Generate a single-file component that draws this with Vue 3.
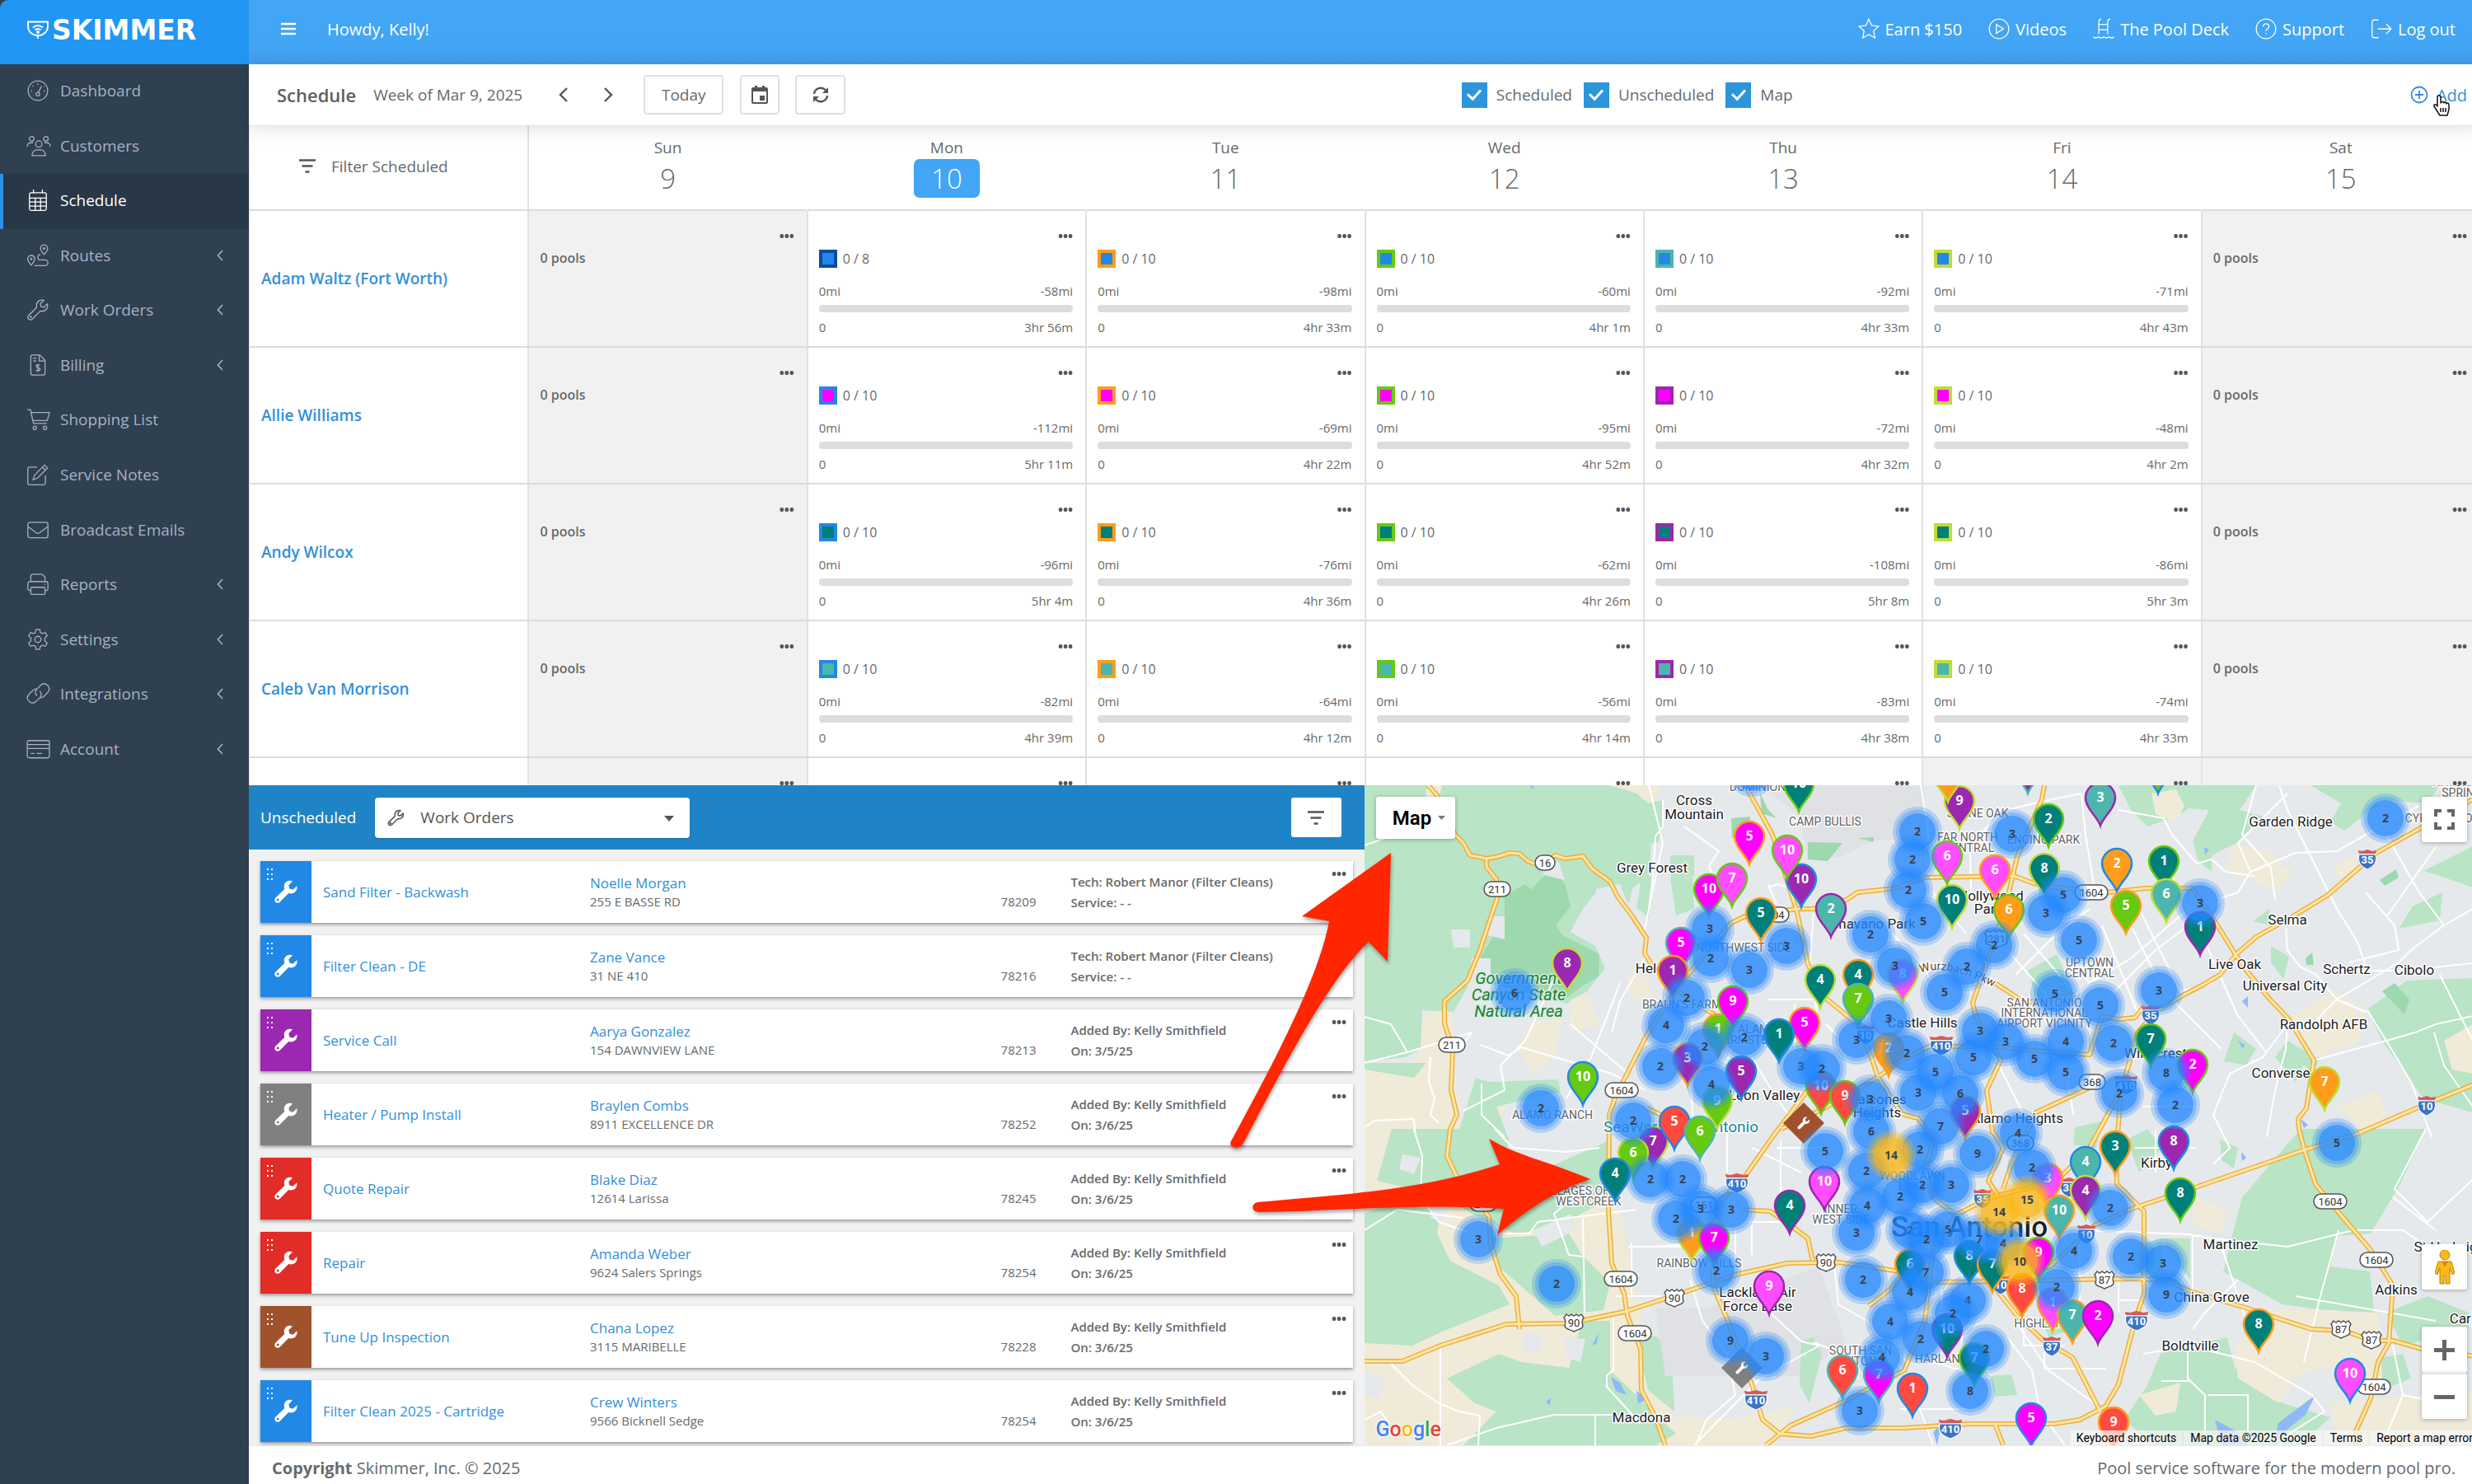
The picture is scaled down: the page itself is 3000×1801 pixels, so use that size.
<script setup>
const icons = {
  gauge: '<circle cx="12" cy="12" r="11"/><circle cx="12" cy="16" r="2"/><path d="M12.6 14l3.4-7"/><path d="M12 4.2v1M6 6.5l.6.6M4.2 12.5h1M18.8 12.5h1M18.6 7.6l.3-.3M6.4 16.8h.3" stroke-width="1.8"/>',
  users: '<circle cx="5" cy="4" r="2.6"/><circle cx="21" cy="4" r="2.6"/><circle cx="13" cy="10" r="3.6"/><path d="M0 13c0-3 1.500-4.500 4-4.500h2.500M26 13c0-3-1.500-4.500-4-4.500h-2.500M5.500 23c0-4 2.500-6.500 6-6.500h3c3.500 0 6 2.500 6 6.500z"/>',
  calendar: '<rect x="2.500" y="3.500" width="19" height="20" rx="2"/><path d="M2.500 9.500h19M2.500 14h19M2.500 18.700h19M9 9.500v14M15 9.500v14M7 0v4M17 0v4"/>',
  route: '<path d="M19 11c-2.500-3-4-5-4-7a4 4 0 0 1 8 0c0 2-1.500 4-4 7zM4.500 23c-2.500-3-4-5-4-7a4 4 0 0 1 8 0c0 2-1.500 4-4 7zM8 23.500h12a3 3 0 0 0 0-6.500h-5a3 3 0 0 1 0-6"/><circle cx="19" cy="4" r=".8"/><circle cx="4.500" cy="16" r=".8"/>',
  wrench: '<path d="M22.600 5.400l-3.900 3.600-3.200-.6-.7-3.300L18.700 1.300C15 0 10.600 2.300 10.400 6.700c0 1 .1 1.700.3 2.500L1.800 18.100c-1.400 1.400-1.400 3.100-.2 4.300s3 1.200 4.300-.2l8.900-8.900c5 1.400 9.300-2.900 7.800-7.900z"/><circle cx="4" cy="20" r=".6"/>',
  invoice: '<path d="M5 .7h9l6 6V21a2.300 2.300 0 0 1-2.300 2.300H6.300A2.300 2.300 0 0 1 4 21V2z"/><path d="M13.500 1v6.500H20M6.500 4.500h4M6.500 7.500h4M14.300 12.300c-1-1-4.300-1-4.300.9 0 2.200 4.500 1.300 4.500 3.600 0 2-3.500 2-4.800.8M12 10.500v9.500"/>',
  cart: '<path d="M0 1h3.500l3.500 15.500h15M4.200 4.300H25l-2.500 9H6.300"/><circle cx="8.500" cy="21.500" r="1.900"/><circle cx="20" cy="21.500" r="1.900"/>',
  edit: '<path d="M11 3.500H3A2.500 2.500 0 0 0 .6 6v15A2.500 2.500 0 0 0 3 23.500h15a2.500 2.500 0 0 0 2.500-2.500v-8"/><path d="M19.500 1.200l3.300 3.300L11.500 16l-5 1.700 1.700-5zM17 3.700l3.300 3.300"/>',
  mail: '<rect x=".7" y="3.500" width="22.600" height="17.500" rx="2.500"/><path d="M1 8.500l9 6.800c1.300 1 2.700 1 4 0l9-6.800"/>',
  printer: '<path d="M4 8V3A2.500 2.500 0 0 1 6.500.7h10L20 4v4M4 19H2.500A2 2 0 0 1 .7 17v-5.500a2.500 2.500 0 0 1 2.500-2.500h17.600a2.500 2.500 0 0 1 2.500 2.500V17a2 2 0 0 1-1.800 2H20"/><rect x="4" y="15.500" width="16" height="8" rx="1"/><path d="M19 12h1"/>',
  gear: '<circle cx="12" cy="12" r="3.500"/><path d="M10 .8h4l.8 3.400 2.200 1.200 3.300-1.100 2.100 3.500-2.500 2.500v3.400l2.500 2.500-2.100 3.500-3.300-1.100-2.200 1.200-.8 3.400h-4l-.8-3.400L7 18.600l-3.300 1.100-2.100-3.500 2.500-2.500v-3.400L1.600 7.800l2.100-3.500L7 5.400l2.200-1.200z"/>',
  link: '<path d="M11 14c-2.500-2.300-2.400-5 0-7.500l4-4c2.600-2.400 5.600-2.300 8 0s2.300 5.300 0 8l-4.500 4.500c-1.300 1.200-3 1.700-4.500 1.300"/><path d="M14 9c2.500 2.300 2.400 5 0 7.500l-4 4c-2.600 2.400-5.600 2.300-8 0s-2.300-5.300 0-8L6.500 8c1.300-1.200 3-1.700 4.500-1.300"/>',
  card: '<rect x="0" y="2.500" width="25" height="19.500" rx="2"/><path d="M0 7h25M0 11.500h25M4 17h4M10.500 17h6"/>',
  star: '<path d="M12 1l3.300 7.200 7.700.9-5.700 5.300 1.500 7.800L12 18.300l-6.800 3.900 1.500-7.800L1 9.100l7.700-.9z"/>',
  play: '<circle cx="12" cy="12" r="11"/><path d="M9 7v10l8-5z"/>',
  pool: '<path d="M6.500 18V4.500C6.500 2.500 7.500 1 9.500 1M16.500 18V4.500c0-2 1-3.500 3-3.500M6.500 7h10M6.500 13h10M0 21c2 1.600 4 1.600 6 0 2 1.600 4 1.600 6 0 2 1.600 4 1.600 6 0 2 1.600 4 1.600 6 0"/>',
  help: '<circle cx="12" cy="12" r="11"/><path d="M8.800 9.500c0-4.300 6.600-4 6.600-.2 0 2.500-3.300 2.500-3.300 5"/><path d="M12 17v.8" stroke-width="2"/>',
  logout: '<path d="M9 2H4A2.500 2.500 0 0 0 1.500 4.500v15A2.500 2.500 0 0 0 4 22h5M8 12h15M17.500 6.500L23 12l-5.500 5.500"/>'
}

const nav = [
  ['Dashboard', 'gauge'], ['Customers', 'users'], ['Schedule', 'calendar'],
  ['Routes', 'route', 1], ['Work Orders', 'wrench', 1], ['Billing', 'invoice', 1],
  ['Shopping List', 'cart'], ['Service Notes', 'edit'], ['Broadcast Emails', 'mail'],
  ['Reports', 'printer', 1], ['Settings', 'gear', 1], ['Integrations', 'link', 1], ['Account', 'card', 1]
].map(([label, icon, more]) => ({ label, icon, more }))

const links = [['Earn $150', 'star'], ['Videos', 'play'], ['The Pool Deck', 'pool'], ['Support', 'help'], ['Log out', 'logout']]
const layers = ['Scheduled', 'Unscheduled', 'Map']
const days = [['Sun', 9], ['Mon', 10], ['Tue', 11], ['Wed', 12], ['Thu', 13], ['Fri', 14], ['Sat', 15]]

const C = {
  b: '#2288e5', m: '#ff00ff', k: '#ff4dff', p: '#9c27b0', t: '#008078', l: '#4db6ac',
  g: '#66c912', o: '#ff9c1a', r: '#ff4a42', y: '#bfdc38', n: '#0d4aa6'
}
const techs = [
  { name: 'Adam Waltz (Fort Worth)', fill: 'b', rings: 'nogly', cells: [[8, 58, '3hr 56m'], [10, 98, '4hr 33m'], [10, 60, '4hr 1m'], [10, 92, '4hr 33m'], [10, 71, '4hr 43m']] },
  { name: 'Allie Williams', fill: 'm', rings: 'bogpy', cells: [[10, 112, '5hr 11m'], [10, 69, '4hr 22m'], [10, 95, '4hr 52m'], [10, 72, '4hr 32m'], [10, 48, '4hr 2m']] },
  { name: 'Andy Wilcox', fill: 't', rings: 'bogpy', cells: [[10, 96, '5hr 4m'], [10, 76, '4hr 36m'], [10, 62, '4hr 26m'], [10, 108, '5hr 8m'], [10, 86, '5hr 3m']] },
  { name: 'Caleb Van Morrison', fill: 'l', rings: 'bogpy', cells: [[10, 82, '4hr 39m'], [10, 64, '4hr 12m'], [10, 56, '4hr 14m'], [10, 83, '4hr 38m'], [10, 74, '4hr 33m']] }
]

const by = 'Added By: Kelly Smithfield'
const tech = 'Tech: Robert Manor (Filter Cleans)'
const orders = [
  ['Sand Filter - Backwash', 'Noelle Morgan', '255 E BASSE RD', '78209', tech, 'Service: - -', '#2288e5'],
  ['Filter Clean - DE', 'Zane Vance', '31 NE 410', '78216', tech, 'Service: - -', '#2288e5'],
  ['Service Call', 'Aarya Gonzalez', '154 DAWNVIEW LANE', '78213', by, 'On: 3/5/25', '#9c27b0'],
  ['Heater / Pump Install', 'Braylen Combs', '8911 EXCELLENCE DR', '78252', by, 'On: 3/6/25', '#808080'],
  ['Quote Repair', 'Blake Diaz', '12614 Larissa', '78245', by, 'On: 3/6/25', '#e22c28'],
  ['Repair', 'Amanda Weber', '9624 Salers Springs', '78254', by, 'On: 3/6/25', '#e22c28'],
  ['Tune Up Inspection', 'Chana Lopez', '3115 MARIBELLE', '78228', by, 'On: 3/6/25', '#a0522d'],
  ['Filter Clean 2025 - Cartridge', 'Crew Winters', '9566 Bicknell Sedge', '78254', by, 'On: 3/6/25', '#2288e5']
]

const land = [
  ['#f0ebd9', 'M0 340 60 355 72 280 105 270 110 330 115 420 160 440 300 470 340 660 376 770 500 801 0 801Z'],
  ['#b9e4c5', 'M0 0H300L330 10 345 22 362 18 362 50 350 90 345 160 318 140 310 120 285 125 265 150 250 178 280 195 292 222 270 250 245 265 155 240 152 210 135 210 125 245 108 275 70 273 68 320 50 330 0 335Z'],
  ['#9dd8ae', 'M170 134 195 120 202 127 228 99 243 120 250 147 232 170 240 182 285 205 284 232 262 245 240 262 150 240 140 210 155 185 170 182Z'],
  ['#f0ebd9', 'M295 0H362L355 12 345 22 330 8Z M75 0H94L90 22 74 14Z M320 230 340 232 350 255 330 262 318 248Z M200 290 240 280 230 330 205 350 185 320Z M130 365 180 370 150 440 118 430Z M250 260 270 252 285 290 250 300Z'],
  ['#e6e9eb', 'M105 175H128V197H108Z M150 159H170V187L150 182Z M281 125 294 127 292 140 281 136Z M348 70H365V115L345 110Z M325 125 335 118 330 150 318 160Z M130 210H153V250L125 262Z M215 108 235 92 243 115 230 112Z'],
  ['#b9e4c5', 'M0 337 75 337 60 355 0 345Z M33 417 115 417 135 355 150 360 235 357 238 372 160 390 175 430 170 470 220 465 300 430 300 500 245 530 185 545 130 520 100 500 15 480Z M0 520 33 507 92 517 88 544 104 577 163 607 176 630 134 647 92 664 58 680 0 677Z M155 550 248 544 264 570 298 604 290 637 231 644 163 584Z M100 720 163 690 190 700 248 707 264 650 298 650 298 710 340 750 378 787 353 801 120 801 160 760 134 750Z M328 664 357 670 374 717 376 760 344 734Z'],
  ['#e6e9eb', 'M46 448 68 452 60 472 42 466Z M190 440 220 425 232 445 225 460 195 455Z M85 505 100 510 95 530 80 525Z M193 663 215 665 213 688 191 688Z M240 670 268 672 262 700 246 695Z M0 710 24 720 18 745 0 740Z M205 540 250 520 256 540 215 560Z'],
  ['#dfe1e5', 'M353 634 416 634 551 584 584 674 534 717 365 717Z M480 0 678 0 685 64 618 67 578 87 538 90 528 37Z'],
  ['#9dd8ae', 'M538 69 580 70 562 92 538 90Z M600 64 618 63 618 69Z M445 40 468 38 466 60 446 64Z M480 10 490 30 500 40 482 34Z'],
  ['#b9e4c5', 'M371 85H400V110L372 120Z M372 118 398 112 400 150 378 158Z M805 225 840 205 860 250 815 258Z M530 675 545 670 555 690 540 750 528 728Z M925 430 950 417 968 440 940 470Z M930 560 968 550 968 600 935 590Z M820 640 850 628 860 660 830 670Z M760 717 785 715 792 740 765 742Z M862 415 895 408 888 440 860 436Z'],
  ['#b9e4c5', 'M915 0 1082 0 1062 30 1090 38 1058 70 1028 85 1028 105 1012 92 1005 68 1025 30 1000 28 985 38 950 50 930 30Z M1148 0 1305 0 1290 22 1235 18 1208 40 1190 55 1172 45 1185 22Z M1285 104 1345 74 1345 124 1305 110Z M1272 147 1308 130 1305 164 1255 174Z M1078 165 1098 150 1098 170Z M1100 195 1122 208 1115 235 1100 215Z M1217 272 1265 237 1345 234 1354 400 1285 380 1235 310Z M1130 330 1160 330 1150 350Z M1043 335 1055 300 1082 320 1070 340Z M1105 330 1120 310 1145 325 1130 360Z'],
  ['#b9e4c5', 'M1042 590 1065 500 1136 417 1288 417 1257 484 1221 544 1180 547 1172 584 1220 590 1225 640 1167 637 1114 630Z M966 690 1002 680 1047 670 1056 707 1114 750 1172 767 1136 801 958 801 922 770 949 730Z M1038 430 1060 440 1055 465 1040 455Z M966 550 1002 550 1002 600Z M1240 640 1290 620 1340 640 1340 660 1260 680Z M1203 700 1260 690 1270 720 1220 740Z'],
  ['#f0ebd9', 'M1045 104 1055 72 1100 80 1112 98 1128 105 1108 128 1085 120Z M955 10 985 5 995 25 985 45 960 35Z M1125 280 1178 249 1215 274 1208 310 1158 330 1132 307Z M1005 497 1047 517 1038 544 1007 534Z M1056 684 1091 637 1181 637 1203 667 1180 705 1136 714 1110 750 1060 720Z M1172 750 1354 734 1354 801 1180 801Z M1175 640 1230 640 1235 720 1200 720Z M1310 310 1345 290 1345 350 1320 345Z M1180 390 1230 370 1240 400 1215 420Z M940 740 990 725 985 760 960 765Z M1180 95 1205 85 1200 108 1178 112Z M378 765 440 770 520 755 500 801 390 801Z'],
  ['#9dd8ae', 'M1232 115 1252 102 1255 112 1238 122Z M1235 250 1250 240 1268 260 1262 278Z M1142 210 1150 203 1152 218 1143 218Z'],
  ['#8fb9f7', 'M1109 774 1154 740 1142 764 1105 794Z M1032 770 1060 785 1070 801 1040 801Z M1064 445 1070 452 1065 456Z M1065 262 1072 256 1072 270Z M1060 310 1068 315 1066 320Z M1019 75 1025 78 1020 85Z M299 718 310 725 318 740 305 735Z M276 680 284 665 282 677Z M330 735 345 745 332 750Z M220 748 226 744 225 753Z M1136 405 1145 412 1140 416Z M690 785 700 775 695 801Z M200 0 206 2 204 5Z']
]

const streets = 'M0 73 50 55 110 40 M0 281 32 290 52 324 0 337 M52 324 130 300 118 318 100 322 M140 315 175 328 190 318 300 350 340 370 M120 395 170 370 165 340 195 310 230 235 M80 330 78 360 85 380 80 400 90 410 M0 415 12 407 60 405 62 427 M142 362V400L170 427 M345 0 362 70 345 150 340 175 M362 18 362 50 353 62 350 110 345 150 M388 50 430 80 418 98 425 115 M250 290 320 350 M310 240 275 330 M275 330 262 350 245 380 M395 350 400 427 M340 210 310 262 300 300 M60 417 70 450 68 500 90 530 135 545 M145 544H200L210 530 248 525 330 515 M0 540 40 515 120 525 M260 480 265 490 230 520 248 570 265 572 M158 417 180 440 245 445 285 440 M30 700 60 730 90 750 115 760 M92 680V801 M115 760 140 765 138 801 M100 801 160 780 230 764 300 764 M302 640V710L294 716V730L335 775 M280 764V801 M0 770 20 760 30 775 M265 525 267 640 M305 620 360 620 M320 560H400 M324 555V620 M395 600 410 650 440 690 450 740 415 770 402 801 M492 640 530 675 552 680 480 720 400 801 M545 676 580 690 600 720 M570 580 575 630 610 650 660 720 690 801 M466 530H520 M470 534V570 M450 540V580 M350 560 420 555 M500 440 560 440 M505 430 505 500 M440 420 440 470 M470 440 530 470 M490 120 500 145 M490 125 500 120 520 125 M545 155 540 220 550 280 M490 260H545 M522 265V320 M500 310 560 345 M560 290 590 320 M470 330 500 380 530 420 M630 170 670 210 690 240 720 270 M685 64 680 30 675 0 M690 130 730 180 M745 60 780 30 820 20 870 10 M870 10 875 60 885 120 M735 80 736 130 M790 230 840 180 880 150 M780 250 830 270 870 250 900 220 M700 220 680 235 690 260 M800 180 860 250 M780 200 850 280 M840 190 880 240 M760 320 800 400 820 420 M800 320 810 360 M850 330 860 400 M895 170 940 280 M920 150 970 250 1000 280 1040 320 M880 240 930 210 1000 150 M900 260 960 200 1040 140 M940 150 990 250 1030 240 M980 110 1020 190 1060 280 1095 325 M915 30 970 40 980 60 1010 95 M1010 95 1028 90 1045 105 1080 110 M1082 0 1065 60 1100 100 1105 140 M1120 10 1085 45 1060 70 1075 105 1060 130 1000 150 M1110 0 1120 30 1150 90 1180 150 1205 190 1215 220 M1075 105 1130 82 1180 80 1215 60 1240 45 1280 25 M1215 130 1250 170 1255 200 1195 215 M1118 170 1120 200 1135 220 1155 230 1180 260 1215 275 M1300 75 1240 160 M1240 60 1280 130 1310 170 1345 150 M1310 170 1270 200 1255 215 1180 260 1150 290 1120 290 1090 330 1050 350 1030 400 M1217 273 1240 310 1270 360 1295 427 M1155 333 1240 310 1275 300 1300 290 1345 280 M1298 300 1310 340 1345 390 M1305 230 1345 310 M1180 225 1260 225 1345 216 M1120 290 1118 320 1105 370 1095 427 M1010 290 1035 315 M945 390H1010 M975 400 980 427 M1030 400 1050 440 1030 460 M960 420V470 M935 440 1010 440 M870 540 1000 545 1030 550 1120 560 1200 540 1260 540 1290 560 M1040 560 1070 650 M1005 545V620 M1182 540 1160 620 1140 700 M1060 600 1020 640 1005 660 M1288 417 1250 490 1290 530 1354 470 M1248 500 1300 540 M1130 620 1300 650 M999 680V720L1020 740V801 M1024 740H1072V801 M967 723 1000 723 M1000 680 1080 700 1150 740 1165 760 1125 785 1110 801 M1248 680 1260 740 1235 801 M1260 740 1310 750 M868 550V640 M915 570V640 M915 625H945 M800 650V680H850 M825 670V708H900 M790 650 830 710 900 760 M945 690 1000 680 M780 670 810 710 820 760 850 801 M650 757H730 M656 660V760 M725 590V700 M690 700 760 720 M700 600V690'
const roads = [
  'M77 0 88 12 110 60 120 70 128 85 148 89 160 87 177 82 188 83 198 92 212 97 232 85 243 89 265 86 277 102 298 117 307 135 325 159 342 185 340 204 348 217 380 250 430 282',
  'M148 89V99L160 114 161 137 140 200 125 237 97 262V289L107 320 105 370 112 400 104 417 100 450 113 477 144 514 151 524 153 557 165 594 184 620 188 660',
  'M365 801 353 767 336 734 335 684 319 644 315 617 300 580 296 517 297 400 305 377 343 302 378 247 445 167 462 159 525 150 545 150 585 139 598 130 645 125 678 112 788 110 812 119 845 125 902 130 948 125 1005 125 1035 170 1058 207 1072 227 1098 259 1122 284 1152 334 1143 392 1133 405 1134 417 1141 444 1154 484 1181 517 1221 564 1248 607 1243 677 1230 700 1221 744 1203 784V801',
  'M462 0 495 60 525 154 538 217 558 257 598 290 615 330 623 354 652 399 672 404 690 430 680 470 690 500 715 520',
  'M506 417 558 392 623 354 652 334 685 317 762 317 812 322 880 327 895 280 915 284 935 282 947 267',
  'M538 370 495 427 462 474 433 504 420 550 424 610 441 650 471 730 483 770 504 787 542 790 584 780 655 780 734 775 837 775 868 770 899 754 915 727 935 650 946 617V517L913 484 912 450 918 370 928 337 938 300',
  'M0 699H46L92 680 172 654 248 653 315 639 374 620 450 594 513 580 576 579 643 589 690 603 780 602 864 600 922 599 971 600 1002 614 1069 634 1149 660 1190 662 1221 674 1248 674 1283 684 1354 694',
  'M458 515 492 517 517 534 538 550 544 577',
  'M1354 12 1285 50 1228 82 1168 134 1125 160 1082 184 1058 205 1038 230 1018 242 995 254 962 274 938 300 928 337 918 370 880 440 840 480 760 500 720 520 690 560 680 650 655 710 584 747 517 777 487 801',
  'M1354 360 1295 384 1202 424 1136 444 1011 487 931 514 886 534 832 584 790 602 765 610 792 644 824 674 859 694 893 760',
  'M825 0 822 17 792 87 782 130 765 187 738 264 742 280 772 334 755 370 762 420 775 440 757 480 770 500',
  'M895 360 815 397 785 460 775 490', 'M765 240 802 264 862 254', 'M765 775 775 801', 'M343 392 360 400', 'M612 632 640 610 655 590'
]
const places = [
  ['Cross', 400, 18], ['Mountain', 400, 35], ['Grey Forest', 349, 100], ['Helotes', 358, 222], ['Shavano Park', 617, 168],
  ['Hollywood', 760, 134], ['Park', 757, 150], ['Castle Hills', 677, 288], ['Leon Valley', 485, 376], ['Balcones', 623, 381],
  ['Heights', 622, 397], ['Alamo Heights', 792, 404], ['Garden Ridge', 1124, 44], ['Selma', 1120, 163], ['Live Oak', 1056, 217],
  ['Schertz', 1192, 223], ['Cibolo', 1274, 224], ['Universal City', 1117, 243], ['Randolph AFB', 1164, 290], ['Converse', 1112, 349],
  ['Windcrest', 960, 325], ['Kirby', 961, 458], ['Martinez', 1051, 557], ['St Hedwig', 1312, 560], ['Adkins', 1252, 612],
  ['Carpenter', 1354, 647], ['China Grove', 1028, 621], ['Boldtville', 1002, 680], ['Macdona', 336, 767], ['Lackland Air', 477, 615], ['Force Base', 477, 632]
]
const areas = [
  ['CAMP BULLIS', 559, 44], ['STONE OAK', 744, 34], ['FAR NORTH', 732, 63], ['CENTRAL', 734, 76], ['ENCINO PARK', 824, 66],
  ['UPTOWN', 880, 215], ['CENTRAL', 880, 228], ['SAN ANTONIO', 825, 264], ['INTERNATIONAL', 825, 276], ['AIRPORT VICINITY', 825, 289],
  ['NORTHWEST SIDE', 460, 197], ['BRAUN\'S FARM', 385, 266], ['ALAMO', 477, 296], ['FARMSTEAD', 468, 309], ['ALAMO RANCH', 228, 400],
  ['VILLAGES OF', 255, 492], ['WESTCREEK', 272, 505], ['RAINBOW HILLS', 406, 580], ['INNER', 578, 514], ['WEST SIDE', 578, 527],
  ['WOODLAWN', 665, 474], ['LAKE', 665, 487], ['SOUTH SAN', 602, 686], ['ANTONIO', 605, 699], ['HIGHLAND', 823, 653],
  ['HARLANDALE', 712, 696], ['DOMINION', 477, 2], ['NATURAL BRIDGE', 1352, -4], ['SPRINGS', 1336, 9], ['CYPRESS COVE', 1312, 40]
]
const shields = [
  ['s', '16', 219, 94], ['s', '211', 161, 126], ['s', '211', 106, 315], ['s', '1604', 312, 370], ['i', '35', 1217, 90], ['i', '35', 954, 279],
  ['i', '10', 1289, 389], ['i', '410', 924, 364], ['u', '281', 767, 186], ['s', '1604', 882, 130], ['i', '10', 608, 303], ['i', '410', 700, 316],
  ['s', '368', 883, 360], ['s', '1604', 495, 157], ['i', '410', 452, 483], ['s', '151', 412, 509], ['s', '1604', 311, 599], ['u', '90', 376, 622],
  ['u', '90', 254, 652], ['s', '1604', 328, 665], ['u', '90', 560, 579], ['i', '410', 475, 746], ['s', '211', 144, 508], ['i', '35', 750, 502],
  ['s', '368', 796, 434], ['i', '35', 855, 488], ['i', '10', 876, 545], ['u', '87', 898, 600], ['i', '410', 937, 650], ['i', '37', 834, 681],
  ['i', '410', 711, 781], ['s', '1604', 1172, 505], ['s', '1604', 1228, 576], ['u', '87', 1185, 660], ['u', '87', 1222, 673], ['s', '1604', 1225, 730], ['i', '10', 772, 606]
]
/* fill key, ring key, route stop number, x, y */
const pins = [
  'm g 10 418 125', 'k g 7 446 112', 'm l 5 384 190', 'p o 1 374 224', 'p y 8 246 215', 'g o 1 429 295', 'm g 9 447 261',
  'p o 3 392 330', 'g b 10 265 353', 'g y 9 428 382', 'p b 5 457 346', 'p y 7 350 431', 'r b 5 376 407', 'g l 6 407 419', 'g y 6 326 445', 't b 4 304 470',
  't g 10 527 -3', 'm o 5 467 61', 'p b 10 530 113', 'k g 10 513 78', 't o 5 481 154', 'l p 2 566 149', 't y 4 553 235', 't o 4 599 229',
  'g l 7 599 258', 'm o 5 534 287', 't b 1 503 301', 'k y 8 653 228', 'o o 2 636 318', 'r g 10 554 364', 'r g 9 583 376', 'p o 5 729 394',
  'p y 9 722 18', 'o y 4 708 -15', 'p l 1 805 -25', 'l p 3 893 14', 't g 2 830 40', 'k o 6 765 102', 't y 8 825 100', 't y 10 713 138', 'k g 6 707 85', 'o g 6 782 150',
  'g b 1 963 -25', 'o b 2 913 94', 't g 1 970 91', 'l y 6 973 131', 'g o 5 924 145', 't p 1 1014 171', 't g 7 954 307', 'm g 2 1005 338', 'o y 7 1165 359',
  'p b 8 982 431', 'l b 4 875 456', 't o 3 911 437', 'k o 3 829 476', 'p y 4 875 491', 't g 8 990 494', 'l o 10 843 515', 'm g 9 818 566', 't b 8 734 570',
  't o 7 762 580', 't o 6 662 580', 'r o 8 798 610', 'k o 1 835 627', 'l o 7 859 642', 'm p 2 890 643', 't o 8 1085 653', 'k b 10 1196 713',
  't p 10 707 659', 't g 7 740 694', 'r b 1 665 731', 'm b 5 809 767', 'r o 9 909 772', 'k p 10 558 480', 't p 4 516 509', 'o y 1 397 542',
  'm g 7 424 548', 'k p 9 491 607', 'r l 6 580 709', 'm l 7 624 714'
].map(s => s.split(' ')).map(([f, r, n, x, y]) => ({ f: C[f], r: C[r], n, x, y }))
const clusters = [
  '3 419 174', '2 420 210', '6 182 252', '2 391 258', '4 366 291', '2 413 317', '2 359 341', '4 421 363', '2 214 392', '2 326 407',
  '2 671 56', '3 786 59', '2 665 90', '2 660 127', '5 678 165', '5 848 133', '3 827 155', '2 614 181', '5 867 188', '2 764 194', '3 512 195',
  '3 467 224', '3 644 219', '2 731 220', '5 704 251', '5 838 253', '5 893 267', '3 636 283', '2 461 306', '3 747 298', '3 597 309', '3 778 311',
  '4 851 311', '2 658 325', '5 739 330', '5 813 332', '5 693 348', '5 851 348', '3 530 341', '2 555 344', '3 672 373', '6 723 374', '3 614 381',
  '7 699 414', '6 615 420', '4 793 422', '2 470 -16', '2 1239 40', '3 1014 143', '3 964 249', '2 909 313', '8 973 349', '2 916 374', '2 984 388', '5 1180 434',
  '2 674 442', '9 744 447', '2 810 464', '2 677 485', '3 712 485', '2 650 499', '2 905 513', '2 662 540', '5 708 539', '2 682 551', '7 746 551', '4 775 556',
  '4 861 565', '2 930 572', '3 969 580', '7 681 591', '2 840 609', '4 662 615', '9 973 618', '4 732 625', '2 714 641', '2 675 672', '2 754 684', '8 735 735',
  '5 559 444', '2 347 478', '2 386 478', '2 609 468', '3 408 514', '3 445 515', '2 378 526', '4 610 510', '3 597 543', '3 138 551', '2 233 605', '2 427 589',
  '2 605 600', '4 638 651', '9 444 674', '3 487 693', '4 628 694', '3 601 759', '15 804 503', '14 770 518', '14 639 449', '10 795 578'
].map(s => s.split(' ')).map(([n, x, y]) => ({ n, x, y, c: n > 9 ? '#fdb813' : '#2388ff' }))
</script>

<template>
  <div class="app">
    <aside class="side">
      <a class="logo" href="#" aria-label="Skimmer">
        <svg width="28" height="22" viewBox="0 0 28 22" fill="none" stroke="#fff" stroke-width="2">
          <path d="M2 1.500h24v6c0 5-4 9-9.500 10.500h-5C6 16.500 2 12.500 2 7.500z" /><path d="M14 17v5M8 8.500c3.500-3.500 8.500-3.500 12 0M10.500 11.500c2-2 5-2 7 0" /><circle cx="14" cy="14" r="1" />
        </svg>
        <span>SKIMMER</span>
      </a>
      <nav class="nav">
        <a v-for="n in nav" :key="n.label" href="#" :class="{ on: n.label === 'Schedule' }">
          <svg class="ico" viewBox="-1 -1 26 26" v-html="icons[n.icon]"></svg>
          <span>{{ n.label }}</span>
          <svg v-if="n.more" class="chev" viewBox="0 0 8 14"><path d="M7 1L1.500 7 7 13" /></svg>
        </a>
      </nav>
    </aside>

    <main class="main">
      <header class="top">
        <button class="burger" aria-label="Toggle menu"><svg width="18" height="16"><path d="M0 2h18M0 8h18M0 14h18" stroke="#fff" stroke-width="2.600" /></svg></button>
        <span class="hi">Howdy, Kelly!</span>
        <a v-for="l in links" :key="l[0]" href="#" class="toplink">
          <svg class="ico" viewBox="-1 -1 26 26" v-html="icons[l[1]]"></svg>{{ l[0] }}
        </a>
      </header>

      <section class="bar">
        <div class="left">
          <h1>Schedule</h1>
          <span class="week">Week of Mar 9, 2025</span>
          <button class="arrow" aria-label="Previous week"><svg width="12" height="18"><path d="M10 1L2 9l8 8" /></svg></button>
          <button class="arrow" aria-label="Next week"><svg width="12" height="18"><path d="M2 1l8 8-8 8" /></svg></button>
          <button class="btn today">Today</button>
          <button class="btn date" aria-label="Pick date">
            <svg width="22" height="22"><path fill="#555" fill-rule="evenodd" d="M5 0h3v2h6V0h3v2h2a2 2 0 0 1 2 2v16a2 2 0 0 1-2 2H3a2 2 0 0 1-2-2V4a2 2 0 0 1 2-2h2zM3 7v13h16V7zM11 12h6v6h-6z" /></svg>
          </button>
          <button class="btn sync" aria-label="Refresh">
            <svg width="20" height="20" fill="none" stroke="#555" stroke-width="2.400"><path d="M2 9a8 8 0 0 1 14-4.500M18 11a8 8 0 0 1-14 4.500" /><path fill="#555" stroke="none" d="M19 1v7h-7zM1 19v-7h7z" /></svg>
          </button>
        </div>
        <div class="checks">
          <label v-for="l in layers" :key="l"><input type="checkbox" checked />{{ l }}</label>
        </div>
        <a href="#" class="add">
          <svg width="22" height="22" fill="none" stroke="#348fdb" stroke-width="1.800"><circle cx="11" cy="11" r="9.500" /><path d="M11 6v10M6 11h10" /></svg>Add
        </a>
      </section>

      <section class="sched">
        <table>
          <thead>
            <tr>
              <th class="filter">
                <button><svg width="20" height="17"><path d="M0 1.500h20M3.500 8.500h13M7.500 15.500h5" stroke="#555" stroke-width="2.600" /></svg>Filter Scheduled</button>
              </th>
              <th v-for="d in days" :key="d[1]" scope="col"><span class="dow">{{ d[0] }}</span><span class="num" :class="{ now: d[1] === 10 }">{{ d[1] }}</span></th>
            </tr>
          </thead>
          <tbody>
            <tr v-for="t in techs" :key="t.name">
              <th scope="row"><a href="#">{{ t.name }}</a></th>
              <td class="off"><button class="dots" aria-label="More">•••</button><span class="pools">0 pools</span></td>
              <td v-for="(c, i) in t.cells" :key="i">
                <button class="dots" aria-label="More">•••</button>
                <div class="count"><i :style="{ background: C[t.fill], borderColor: C[t.rings[i]] }"></i>0 / {{ c[0] }}</div>
                <div class="pair"><span>0mi</span><span>-{{ c[1] }}mi</span></div>
                <div class="meter"></div>
                <div class="pair"><span>0</span><span>{{ c[2] }}</span></div>
              </td>
              <td class="off"><button class="dots" aria-label="More">•••</button><span class="pools">0 pools</span></td>
            </tr>
            <tr>
              <th scope="row"></th>
              <td v-for="i in 7" :key="i" :class="{ off: i === 1 || i > 5 }"><button class="dots" aria-label="More">•••</button></td>
            </tr>
          </tbody>
        </table>
      </section>

      <div class="lower">
        <section class="un">
          <div class="unhead">
            <label for="kind">Unscheduled</label>
            <div class="pick">
              <svg class="ico" viewBox="-1 -1 26 26" v-html="icons.wrench"></svg>
              <select id="kind"><option>Work Orders</option></select>
              <svg class="caret" width="12" height="7"><path d="M0 0h12L6 7z" fill="#555" /></svg>
            </div>
            <button class="fbtn" aria-label="Filter unscheduled"><svg width="20" height="17"><path d="M0 1.500h20M3.500 8.500h13M7.500 15.500h5" stroke="#555" stroke-width="2.600" /></svg></button>
          </div>
          <ul class="cards">
            <li v-for="(o, i) in orders" :key="i">
              <div class="tag" :style="{ background: o[6] }">
                <svg width="62" height="75" fill="#fff"><path d="M8 9h2v2H8zM13 9h2v2h-2zM8 15h2v2H8zM13 15h2v2h-2zM8 21h2v2H8zM13 21h2v2h-2z" /><path fill-rule="evenodd" transform="translate(16 22)" d="M28.300 8.200l-4.800 4.500-4.200-1.200-1-4.200L23 2.500C18.500.5 12.600 3.200 12.800 9c0 1.200.2 2 .5 3L2.700 22.300c-1.800 1.800-1.800 4-.3 5.400 1.500 1.500 3.800 1.500 5.500-.2L18.200 17c6.300 1.800 11.500-2.800 10.100-8.800zM5.200 23.600a1.500 1.500 0 1 1 0 3 1.500 1.500 0 0 1 0-3z" /></svg>
              </div>
              <a href="#" class="job">{{ o[0] }}</a>
              <div class="who"><a href="#">{{ o[1] }}</a><div class="addr"><span>{{ o[2] }}</span><span>{{ o[3] }}</span></div></div>
              <div class="meta"><div>{{ o[4] }}</div><div>{{ o[5] }}</div></div>
              <button class="dots" aria-label="More">•••</button>
            </li>
          </ul>
        </section>

        <section class="map">
          <svg class="canvas" width="100%" height="100%">
            <path v-for="(l, i) in land" :key="'l' + i" :fill="l[0]" :d="l[1]" />
            <path class="street" :d="streets" />
            <path v-for="(r, i) in roads" :key="'a' + i" class="road edge" :d="r" />
            <path v-for="(r, i) in roads" :key="'b' + i" class="road" :d="r" />
            <g class="place"><text v-for="p in places" :key="p[0]" :x="p[1]" :y="p[2] + 6">{{ p[0] }}</text></g>
            <g class="area"><text v-for="(p, i) in areas" :key="i" :x="p[1]" :y="p[2] + 5">{{ p[0] }}</text></g>
            <g class="park"><text x="187" y="241">Government</text><text x="187" y="261">Canyon State</text><text x="187" y="281">Natural Area</text></g>
            <text class="poi" x="384" y="421">SeaWorld San Antonio</text>
            <text class="city" x="734" y="548">San Antonio</text>
            <path id="wp" d="M675 228 Q 705 215 765 246" fill="none" />
            <text class="rd"><textPath href="#wp">Wurzbach Pkwy</textPath></text>
            <g v-for="(s, i) in shields" :key="'s' + i" :transform="`translate(${s[2]} ${s[3]})`" class="shield">
              <rect v-if="s[0] === 's'" :x="-4 - s[1].length * 4" y="-9" :width="8 + s[1].length * 8" height="18" rx="9" fill="#fff" stroke="#555" stroke-width="1.500" />
              <path v-else-if="s[0] === 'u'" :transform="s[1].length > 2 ? 'scale(1.200 1)' : ''" d="M-9-10l3 2 3-2 3 2 3-2 3 2 3-2 3 4c-3 4-2 7-1 10 0 4-6 4-11 7-5-3-11-3-11-7 1-3 2-6-1-10z" fill="#fff" stroke="#555" stroke-width="1.500" />
              <g v-else :transform="s[1].length > 2 ? 'scale(1.300 1)' : ''"><path d="M-10-6c-2 10 2 14 10 18 8-4 12-8 10-18z" fill="#3b74c4" stroke="#fff" /><path d="M-10-7l-1-4 5 1 6-2 6 2 5-1-1 4z" fill="#d45b5b" /></g>
              <text y="5" :class="{ w: s[0] === 'i' }">{{ s[1] }}</text>
            </g>
            <g transform="translate(533 410)"><path d="M0-25L25 0 0 25-25 0z" fill="#a0522d" /><path transform="translate(-8 -8) scale(.66)" fill="#fff" d="M22.600 5.400l-3.900 3.600-3.200-.6-.7-3.300L18.700 1.300C15 0 10.600 2.300 10.400 6.700c0 1 .1 1.700.3 2.500L1.800 18.100c-1.400 1.400-1.400 3.100-.2 4.300s3 1.200 4.300-.2l8.900-8.900c5 1.400 9.300-2.900 7.800-7.900z" /></g>
            <g transform="translate(458 707)"><path d="M0-25L25 0 0 25-25 0z" fill="#808080" /><path transform="translate(-8 -8) scale(.66)" fill="#fff" d="M22.600 5.400l-3.900 3.600-3.200-.6-.7-3.300L18.700 1.300C15 0 10.600 2.300 10.400 6.700c0 1 .1 1.700.3 2.500L1.800 18.100c-1.400 1.400-1.400 3.100-.2 4.300s3 1.200 4.300-.2l8.900-8.900c5 1.400 9.300-2.900 7.800-7.900z" /></g>
            <g v-for="(p, i) in pins" :key="'p' + i" :transform="`translate(${p.x} ${p.y})`" class="pin">
              <path d="M0 35C-3 25-18 14-18 1A18 18 0 1 1 18 1C18 14 3 25 0 35z" :fill="p.f" :stroke="p.r" stroke-width="2.500" />
              <text y="6">{{ p.n }}</text>
            </g>
            <g v-for="(c, i) in clusters" :key="'c' + i" :transform="`translate(${c.x} ${c.y})`" class="cluster">
              <g :fill="c.c"><circle r="30" opacity=".25" /><circle r="26" opacity=".3" /><circle r="22" opacity=".6" /></g>
              <text y="5">{{ c.n }}</text>
            </g>
          </svg>
          <button class="ctl type">Map<svg width="9" height="5"><path d="M0 0h9L4.500 5z" fill="#777" /></svg></button>
          <button class="ctl full" aria-label="Full screen"><svg width="25" height="25" fill="none" stroke="#666" stroke-width="4"><path d="M2 9V2h7M16 2h7v7M23 16v7h-7M9 23H2v-7" /></svg></button>
          <div class="stack">
            <button class="ctl peg" aria-label="Street view">
              <svg width="24" height="42"><circle cx="12" cy="6" r="6" fill="#fbb917" stroke="#b98516" stroke-width="1" /><path d="M4 14h16l4 14-3 2-3-8v19h-5V31h-2v10H6V22l-3 8-3-2z" fill="#fbb917" stroke="#b98516" stroke-width="1" /><path d="M8 14h8l-4 6z" fill="#e27d12" /></svg>
            </button>
            <div class="zoom">
              <button class="ctl" aria-label="Zoom in"><svg width="25" height="25" stroke="#666" stroke-width="5"><path d="M0 12.500h25M12.500 0v25" /></svg></button>
              <button class="ctl" aria-label="Zoom out"><svg width="25" height="25" stroke="#666" stroke-width="5"><path d="M0 12.500h25" /></svg></button>
            </div>
          </div>
          <a class="glogo" href="#" aria-label="Google"><b class="c1">G</b><b class="c2">o</b><b class="c3">o</b><b class="c1">g</b><b class="c4">l</b><b class="c2">e</b></a>
          <div class="attr"><button>Keyboard shortcuts</button><span>Map data ©2025 Google</span><a href="#">Terms</a><a href="#">Report a map error</a></div>
        </section>
      </div>

      <footer class="foot"><span><b>Copyright</b> Skimmer, Inc. © 2025</span><span>Pool service software for the modern pool pro.</span></footer>
    </main>

    <svg class="marks" width="100%" height="100%" aria-hidden="true">
      <g fill="#ff2600" class="cast">
        <path d="M1494 1385C1540 1300 1600 1190 1613 1118L1580 1112 1688 1035 1684 1167 1661 1143C1610 1190 1550 1310 1508 1389 1502 1396 1490 1392 1494 1385z" />
        <path d="M1526 1459C1620 1450 1720 1446 1820 1413L1807 1382C1840 1402 1880 1410 1930 1431 1885 1446 1850 1470 1817 1499L1825 1467C1720 1460 1620 1470 1528 1471 1518 1470 1518 1461 1526 1459z" />
      </g>
      <path transform="translate(2952 115)" fill="#fff" stroke="#111" stroke-width="1.500" stroke-linejoin="round" d="M6 14V3c0-3 4-3 4 0v7c0-2 4-2 4 0 0-2 3-1 3 1 0-2 3-1 3 1v6l-2 7H9L2 14c-1-2 2-4 4 0zM10 16v5M13 16v5M16 16v5" />
    </svg>
  </div>
</template>

<style>
body { margin: 0; }
</style>

<style scoped>
* { box-sizing: border-box; }
.app { position: relative; display: grid; grid-template-columns: 302px minmax(0, 1fr); grid-template-rows: minmax(0, 1fr); height: 100vh; overflow: hidden; font: 19px "Open Sans", "Noto Sans", sans-serif; color: #676a6c; background: #fff; }
a { color: #348fdb; text-decoration: none; }
button { font: inherit; color: inherit; background: none; border: 0; padding: 0; display: flex; align-items: center; justify-content: center; }
.ico { fill: none; stroke: currentColor; stroke-width: 1.2; width: 28px; height: 28px; flex: none; overflow: visible; }

.side { background: #2f4050; }
.logo { height: 78px; display: flex; align-items: center; gap: 3px; padding: 0 0 6px 32px; background: #2196f3; color: #fff; border-top-left-radius: 10px; font: bold 33px/1 "DejaVu Sans", sans-serif; }
.nav { display: grid; grid-auto-rows: 1fr; height: 865px; }
.nav a { display: flex; align-items: center; gap: 13px; padding: 0 31px 2px 32px; color: #a7b1c2; }
.nav .on { background: #293846; color: #fff; border-left: 4px solid #3190e6; padding-left: 28px; }
.chev { width: 8px; height: 14px; margin-left: auto; fill: none; stroke: #a7b1c2; stroke-width: 1.6; }

.main { display: grid; grid-template-rows: 78px 75px minmax(0, 1fr) auto 46px; grid-template-columns: minmax(0, 1fr); margin-right: -9px; min-width: 0; min-height: 0; }
.top { display: flex; align-items: center; gap: 31px; padding: 0 29px 8px 39px; background: linear-gradient(#42a5f5 60%, #459fee); color: #fff; font-size: 20px; }
.hi { margin-left: 7px; margin-right: auto; }
.toplink { display: flex; align-items: center; gap: 6px; color: #fff; }

.bar { position: relative; z-index: 1; display: grid; grid-template-columns: 54% 1fr auto; align-items: center; background: #fff; border-bottom: 1px solid #e4e4e4; box-shadow: 0 3px 22px rgba(0, 0, 0, .12); }
.left { display: flex; align-items: center; padding-left: 34px; }
h1 { margin: 0 21px 0 0; font-size: 22px; font-weight: 600; color: #5c5f61; }
.week { margin-right: 39px; }
.arrow { width: 22px; height: 40px; margin-right: 32px; }
.arrow svg { fill: none; stroke: #555; stroke-width: 2.4; }
.btn { height: 48px; border: 2px solid #e0e0e0; border-radius: 4px; background: #fff; }
.today { width: 97px; margin-right: 20px; }
.date { width: 48px; margin-right: 19px; }
.sync { width: 61px; }
.checks { display: flex; gap: 14px; padding-left: 10px; }
.checks label { display: flex; align-items: center; gap: 11px; }
.checks input { appearance: none; margin: 0; width: 31px; height: 31px; background: #2d95da; display: grid; place-items: center; }
.checks input::after { content: ""; width: 7px; height: 13px; border: solid #fff; border-width: 0 3px 3px 0; transform: translateY(-2px) rotate(42deg); }
.add { display: flex; align-items: center; gap: 10px; padding-right: 15px; font-size: 20px; }

.sched { overflow: hidden; }
table { width: 100%; table-layout: fixed; border-spacing: 0; }
th, td { height: 166px; padding: 0; border-bottom: 2px solid #dcdcdc; border-left: 2px solid #e2e2e2; text-align: left; vertical-align: top; }
thead th { height: 103px; text-align: center; font-weight: 400; }
thead th + th + th { border-left-color: transparent; }
th:first-child { border-left-width: 1px; vertical-align: middle; }
tbody th { padding-left: 14px; font-weight: 600; }
.filter button { gap: 19px; margin: 0 0 4px 60px; }
.dow { display: block; padding-top: 12px; line-height: 28px; }
.num { display: block; width: 80px; margin: 0 auto; line-height: 47px; border-radius: 7px; font-size: 33px; font-weight: 300; }
.now { background: #42a5f5; color: #fff; }
td { padding: 20px 15px 0 13px; }
.off { background: #f1f1f1; }
.dots { margin-left: auto; height: 20px; font: 700 16px/20px "Open Sans", sans-serif; color: #555; }
.pools { display: block; font-size: 16px; font-weight: 600; line-height: 34px; }
.count { display: flex; align-items: center; gap: 7px; height: 36px; margin-bottom: 11px; font-size: 16px; }
.count i { width: 22px; height: 22px; border: 4px solid; }
.pair { display: flex; justify-content: space-between; font-size: 15px; line-height: 20px; }
.meter { height: 9px; margin: 7px 0 8px; border-radius: 4px; background: #ddd; }

.lower { display: grid; grid-template-columns: minmax(0, 1fr) minmax(0, 1fr); border-bottom: 1px solid #e7eaec; }
.un { background: #f1f1f1; }
.unhead { display: flex; align-items: center; height: 78px; padding: 0 28px 0 14px; background: #1f84c7; color: #fff; }
.pick { position: relative; width: 382px; margin: 0 auto 0 23px; }
.pick .ico { position: absolute; left: 15px; top: 14px; width: 21px; height: 21px; color: #555; stroke-width: 2; }
.caret { position: absolute; right: 19px; top: 22px; }
select { appearance: none; width: 100%; height: 49px; padding: 0 0 0 55px; border: 0; border-radius: 4px; background: #fff; font: inherit; color: #555; box-shadow: 0 1px 2px rgba(0, 0, 0, .2); }
.fbtn { width: 61px; height: 48px; border-radius: 3px; background: #fff; }
.cards { list-style: none; margin: 0; padding: 14px 14px 4px; display: grid; gap: 15px; }
.cards li { display: grid; grid-template-columns: 62px 338px minmax(0, 1fr) 42px 317px 25px; height: 75px; align-items: center; background: #fff; box-shadow: 0 2px 4px rgba(0, 0, 0, .38); }
.tag { height: 75px; }
.tag svg { display: block; }
.job { padding-left: 14px; font-size: 17px; }
.who { font-size: 17px; line-height: 23px; }
.addr { display: flex; justify-content: space-between; font-size: 15px; }
.meta { grid-column: 5; font-size: 15px; font-weight: 600; line-height: 25px; }
.cards .dots { align-self: start; margin: 5px 8px 0 0; }

.map { position: relative; overflow: hidden; background: #e6e9eb; font-family: Roboto, "Liberation Sans", sans-serif; }
.canvas { position: absolute; inset: 0; }
.street { fill: none; stroke: #fff; stroke-width: 2; stroke-linejoin: round; }
.road { fill: none; stroke: #fde5a0; stroke-width: 3; stroke-linejoin: round; }
.edge { stroke: #ecae3c; stroke-width: 6; }
text { text-anchor: middle; }
.place text, .area text, .park text, .poi, .city, .rd { paint-order: stroke; stroke: #fff; stroke-width: 3px; stroke-linejoin: round; }
.place { font-size: 17px; fill: #202124; }
.area { font-size: 14px; fill: #5f6368; }
.park { font-size: 20px; font-style: italic; fill: #1e7a3c; }
.park text { stroke: #d5efdb; }
.poi { font-size: 19px; fill: #128a94; }
.city { font-size: 35px; font-weight: 500; fill: #202124; }
.rd { font-size: 14px; fill: #6b3d1c; text-anchor: start; }
.shield text { font-size: 13px; fill: #333; }
.shield .w { fill: #fff; font-weight: 700; }
.pin text { font: 700 16px "Open Sans", sans-serif; fill: #fff; }
.cluster text { font: 700 14px "Open Sans", sans-serif; fill: #374252; }
.ctl { background: #fff; width: 55px; height: 55px; border-radius: 3px; box-shadow: 0 1px 5px rgba(0, 0, 0, .3); }
.type { position: absolute; left: 14px; top: 14px; width: 96px; height: 51px; gap: 8px; padding-left: 9px; font-size: 24px; font-weight: 600; color: #000; }
.full { position: absolute; right: 15px; top: 14px; }
.stack { position: absolute; right: 15px; bottom: 32px; display: grid; gap: 45px; }
.zoom .ctl { height: 56px; }
.zoom .ctl + .ctl { border-top: 2px solid #e6e6e6; }
.glogo { position: absolute; left: 14px; bottom: 4px; font-size: 25px; line-height: 30px; text-shadow: 0 0 2px #fff, 0 0 2px #fff, 0 0 3px #fff; }
.glogo b { font-weight: 500; }
.c1 { color: #4285f4; } .c2 { color: #ea4335; } .c3 { color: #fbbc05; } .c4 { color: #34a853; }
.attr { position: absolute; right: 0; bottom: 0; display: flex; font-size: 14px; line-height: 18px; }
.attr > * { padding: 0 8px; background: rgba(245, 245, 245, .75); color: #000; border-left: 1px solid rgba(0, 0, 0, .06); }

.foot { display: flex; justify-content: space-between; align-items: center; padding: 6px 29px 0 28px; font-size: 20px; }
.marks { position: absolute; inset: 0; z-index: 2; pointer-events: none; }
.cast { filter: drop-shadow(1px 3px 2px rgba(0, 0, 0, .35)); }
</style>
